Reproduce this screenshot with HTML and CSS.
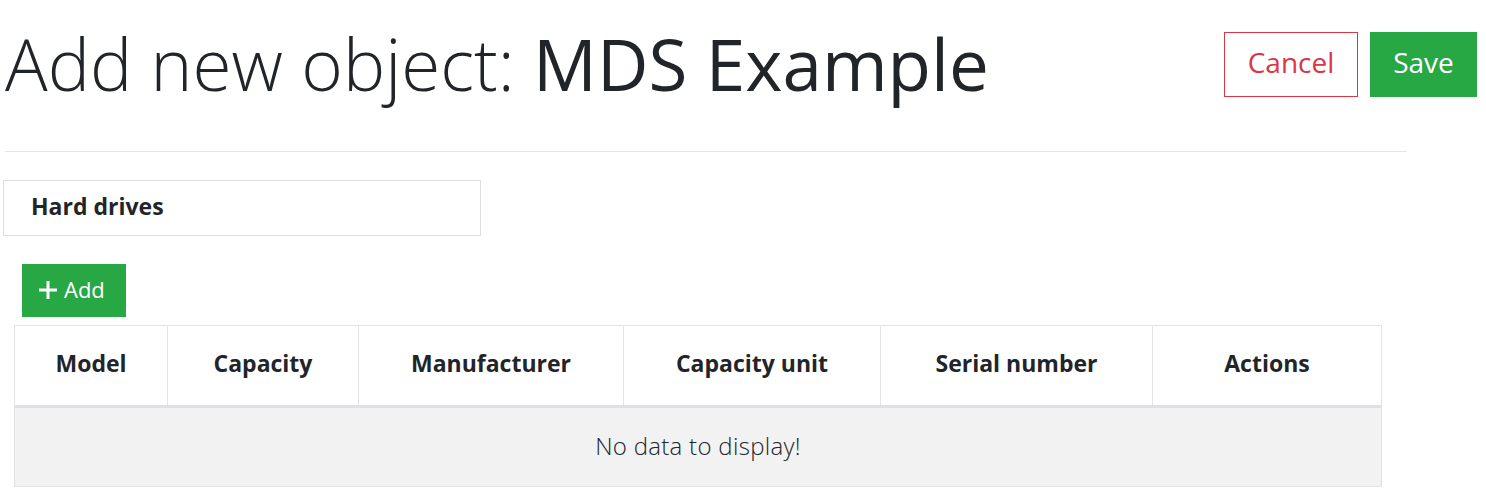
FILE: index.html
```html
<!DOCTYPE html>
<html>
<head>
<meta charset="utf-8">
<link rel="stylesheet" href="styles.css">
</head>
<body>
<div class="page">
  <header class="top">
    <h1 class="title"><span class="light">Add new object:</span> MDS Example</h1>
    <div class="actions">
      <button class="btn btn-cancel">Cancel</button>
      <button class="btn btn-save">Save</button>
    </div>
  </header>
  <hr class="rule">
  <div class="card">Hard drives</div>
  <div class="section">
    <button class="btn-add"><svg width="20" height="20" viewBox="0 0 20 20"><path d="M10 1v18M1 10h18" stroke="#fff" stroke-width="3"/></svg>Add</button>
    <table class="grid">
      <thead>
        <tr>
          <th class="c1">Model</th>
          <th class="c2">Capacity</th>
          <th class="c3">Manufacturer</th>
          <th class="c4">Capacity unit</th>
          <th class="c5">Serial number</th>
          <th class="c6">Actions</th>
        </tr>
      </thead>
      <tbody>
        <tr><td colspan="6" class="empty">No data to display!</td></tr>
      </tbody>
    </table>
  </div>
</div>
</body>
</html>
```
FILE: styles.css
```css
* { box-sizing: border-box; }
body {
  margin: 0;
  font-family: "Open Sans", "Lato", sans-serif;
  color: #212529;
  background: #fff;
}
.page { padding: 0 9px 0 3px; width: 1486px; }
.top {
  display: flex;
  justify-content: space-between;
  align-items: flex-start;
  padding-left: 2px;
  height: 151px;
}
.title {
  margin: 21px 0 0 0;
  font-size: 71px;
  font-weight: 400;
  line-height: 1.2;
}
.light { font-weight: 300; }
.actions { display: flex; gap: 12px; margin-top: 32px; }
.btn {
  height: 65px;
  font-family: inherit;
  font-size: 28px;
  font-weight: 400;
  border-radius: 0;
  padding: 0 0 5px 0;
  cursor: pointer;
}
.btn-cancel {
  width: 134px;
  background: #fff;
  color: #dc3545;
  border: 1px solid #dc3545;
}
.btn-save {
  width: 107px;
  background: #28a745;
  color: #fff;
  border: 1px solid #28a745;
}
.rule {
  margin: 0 0 28px 2px;
  width: 1402px;
  border: 0;
  border-top: 1px solid #e5e5e5;
}
.card {
  width: 478px;
  height: 56px;
  border: 1px solid #dedede;
  padding: 0 0 4px 27px;
  display: flex;
  align-items: center;
  font-size: 23px;
  font-weight: 700;
  color: #212529;
}
.section { padding: 28px 0 0 11px; }
.btn-add {
  margin-left: 8px;
  width: 104px;
  height: 53px;
  background: #28a745;
  border: 0;
  color: #fff;
  font-family: inherit;
  font-size: 22px;
  display: flex;
  align-items: center;
  gap: 6px;
  padding: 0 0 4px 16px;
}
.btn-add svg { margin-top: 3px; }
.grid {
  margin-top: 8px;
  width: 1367px;
  border-collapse: collapse;
  table-layout: fixed;
}
.grid th {
  height: 81px;
  border: 1px solid #e3e3e3;
  border-bottom: 3px solid #dee2e6;
  font-size: 23px;
  font-weight: 700;
  text-align: center;
  color: #212529;
  padding: 0 0 5px 0;
}
.c1 { width: 153px; }
.c2 { width: 191px; }
.c3 { width: 265px; }
.c4 { width: 257px; }
.c5 { width: 272px; }
.c6 { width: 229px; }
.empty {
  height: 80px;
  background: #f2f2f2;
  border: 1px solid #e3e3e3;
  text-align: center;
  font-size: 24px;
  font-weight: 300;
  letter-spacing: 0.3px;
  color: #212529;
  padding: 0 0 4px 0;
}
```
